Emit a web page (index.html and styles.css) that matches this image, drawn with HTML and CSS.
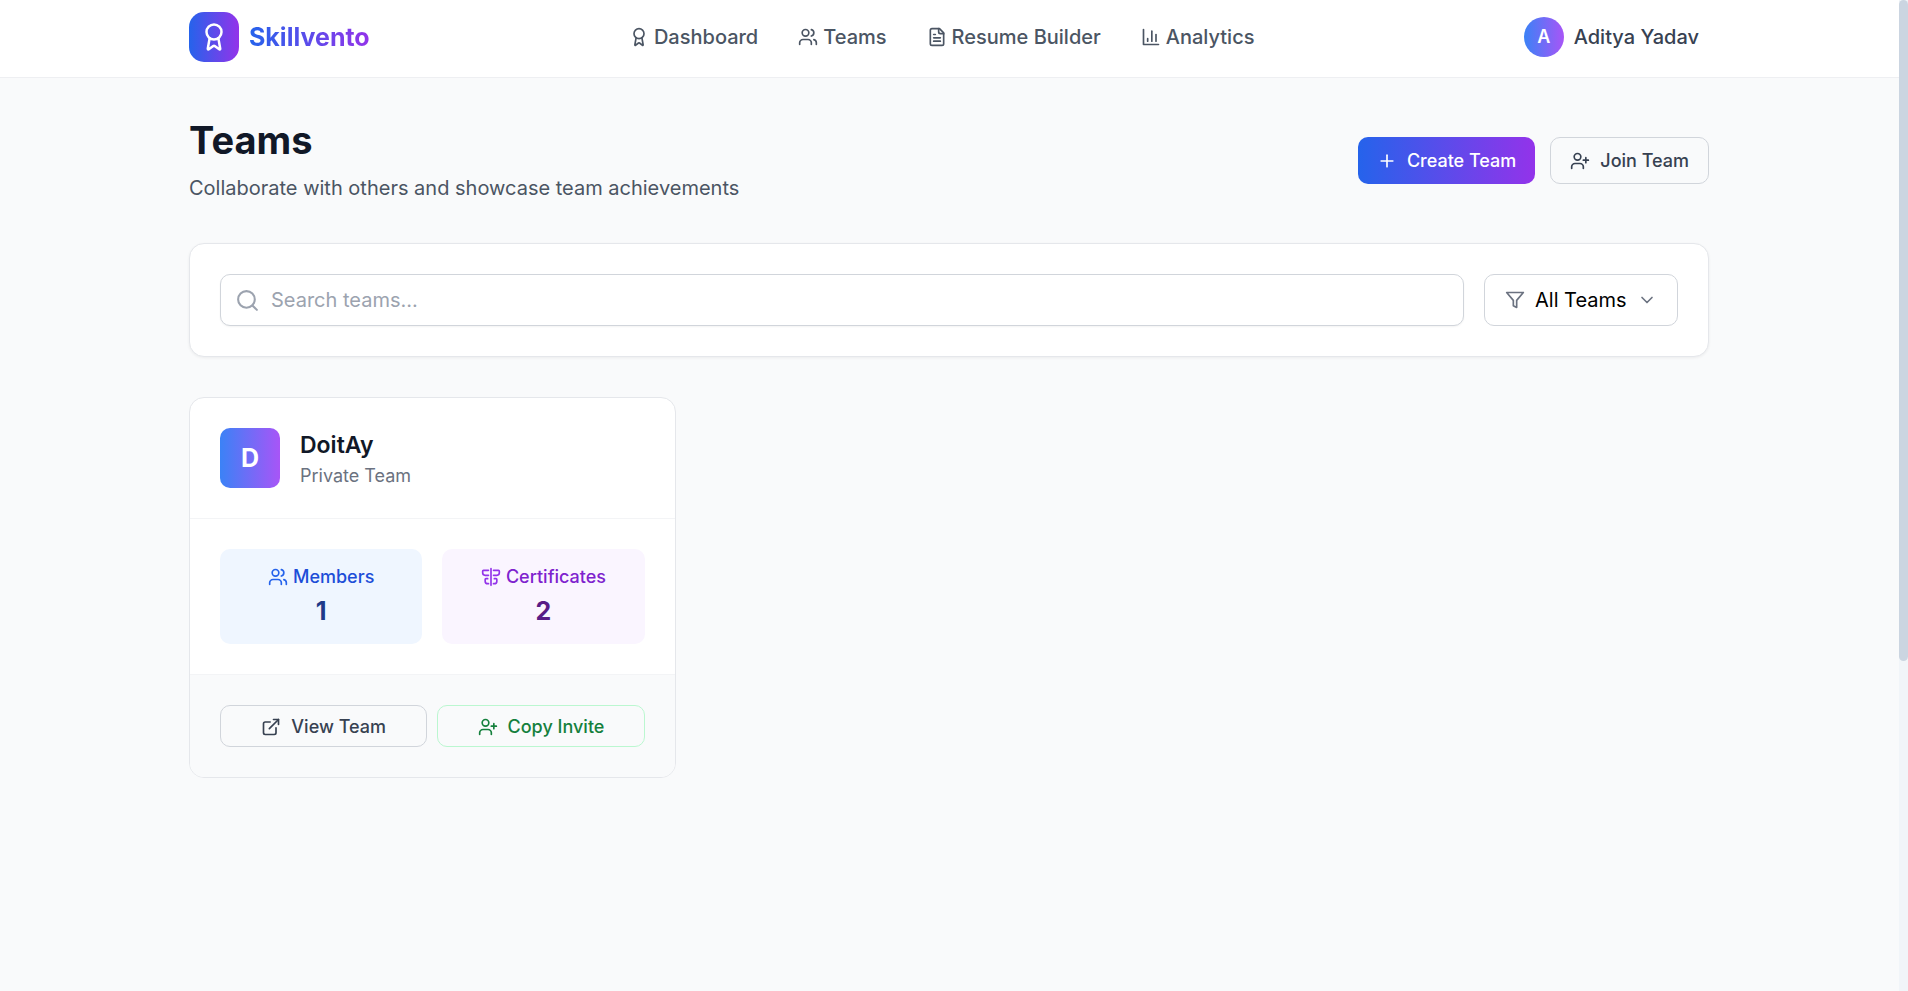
FILE: index.html
```html
<!DOCTYPE html>
<html lang="en">
  <head>
    <meta charset="UTF-8" />
    <meta name="viewport" content="width=device-width, initial-scale=1.0" />
    <title>Teams | Skillvento</title>
    <link rel="stylesheet" href="styles.css">
  </head>
  <body>
    <!-- Icon sprite -->
    <svg class="sprite" aria-hidden="true">
      <symbol id="icon-award" viewBox="0 0 24 24">
        <path d="m15.477 12.89 1.515 8.526a.5.5 0 0 1-.81.47l-3.58-2.687a1 1 0 0 0-1.197 0l-3.586 2.686a.5.5 0 0 1-.81-.469l1.514-8.526" />
        <circle cx="12" cy="8" r="6" />
      </symbol>
      <symbol id="icon-users" viewBox="0 0 24 24">
        <path d="M16 21v-2a4 4 0 0 0-4-4H6a4 4 0 0 0-4 4v2" />
        <circle cx="9" cy="7" r="4" />
        <path d="M22 21v-2a4 4 0 0 0-3-3.87" />
        <path d="M16 3.13a4 4 0 0 1 0 7.75" />
      </symbol>
      <symbol id="icon-file" viewBox="0 0 24 24">
        <path d="M15 2H6a2 2 0 0 0-2 2v16a2 2 0 0 0 2 2h12a2 2 0 0 0 2-2V7Z" />
        <path d="M14 2v4a2 2 0 0 0 2 2h4" />
        <path d="M10 9H8" />
        <path d="M16 13H8" />
        <path d="M16 17H8" />
      </symbol>
      <symbol id="icon-chart" viewBox="0 0 24 24">
        <path d="M3 3v18h18" />
        <path d="M8 17v-3" />
        <path d="M13 17V5" />
        <path d="M18 17V9" />
      </symbol>
      <symbol id="icon-plus" viewBox="0 0 24 24">
        <path d="M5 12h14" />
        <path d="M12 5v14" />
      </symbol>
      <symbol id="icon-user-plus" viewBox="0 0 24 24">
        <path d="M16 21v-2a4 4 0 0 0-4-4H6a4 4 0 0 0-4 4v2" />
        <circle cx="9" cy="7" r="4" />
        <path d="M19 8v6" />
        <path d="M22 11h-6" />
      </symbol>
      <symbol id="icon-search" viewBox="0 0 24 24">
        <circle cx="11" cy="11" r="8" />
        <path d="m21 21-4.3-4.3" />
      </symbol>
      <symbol id="icon-filter" viewBox="0 0 24 24">
        <path d="M22 3H2l8 9.46V19l4 2v-8.54L22 3z" />
      </symbol>
      <symbol id="icon-chevron" viewBox="0 0 24 24">
        <path d="m6 9 6 6 6-6" />
      </symbol>
      <symbol id="icon-certificate" viewBox="0 0 24 24">
        <path d="M12 2v20" />
        <path d="M9 4H3a1 1 0 0 0-1 1v2a3 3 0 0 0 3 3h4" />
        <path d="M15 4h6a1 1 0 0 1 1 1v2a3 3 0 0 1-3 3h-4" />
        <path d="M8 14H6a1 1 0 0 0-1 1v2a3 3 0 0 0 3 3h1" />
        <path d="M16 14h2a1 1 0 0 1 1 1v2a3 3 0 0 1-3 3h-1" />
      </symbol>
      <symbol id="icon-external" viewBox="0 0 24 24">
        <path d="M15 3h6v6" />
        <path d="M10 14 21 3" />
        <path d="M18 13v6a2 2 0 0 1-2 2H5a2 2 0 0 1-2-2V8a2 2 0 0 1 2-2h6" />
      </symbol>
    </svg>

    <header class="navbar">
      <div class="container navbar-inner">
        <a class="brand" href="#">
          <span class="brand-logo"><svg class="icon icon-lg"><use href="#icon-award" /></svg></span>
          <span class="brand-name">Skillvento</span>
        </a>
        <nav class="nav-links">
          <a href="#"><svg class="icon"><use href="#icon-award" /></svg>Dashboard</a>
          <a href="#"><svg class="icon"><use href="#icon-users" /></svg>Teams</a>
          <a href="#"><svg class="icon"><use href="#icon-file" /></svg>Resume Builder</a>
          <a href="#"><svg class="icon"><use href="#icon-chart" /></svg>Analytics</a>
        </nav>
        <button class="user-menu" type="button">
          <span class="user-avatar">A</span>
          <span>Aditya Yadav</span>
        </button>
      </div>
    </header>

    <main class="container main">
      <div class="page-header">
        <div>
          <h1>Teams</h1>
          <p>Collaborate with others and showcase team achievements</p>
        </div>
        <div class="page-actions">
          <button class="btn btn-primary" type="button"><svg class="icon"><use href="#icon-plus" /></svg>Create Team</button>
          <button class="btn" type="button"><svg class="icon"><use href="#icon-user-plus" /></svg>Join Team</button>
        </div>
      </div>

      <section class="toolbar">
        <div class="search">
          <svg class="icon search-icon"><use href="#icon-search" /></svg>
          <input type="text" placeholder="Search teams..." aria-label="Search teams" />
        </div>
        <label class="filter">
          <svg class="icon"><use href="#icon-filter" /></svg>
          <select aria-label="Filter teams">
            <option>All Teams</option>
          </select>
          <svg class="icon"><use href="#icon-chevron" /></svg>
        </label>
      </section>

      <section class="team-grid">
        <article class="team-card">
          <div class="team-header">
            <div class="team-avatar">D</div>
            <div>
              <h2>DoitAy</h2>
              <p>Private Team</p>
            </div>
          </div>
          <div class="team-stats">
            <div class="stat stat-members">
              <div class="stat-label"><svg class="icon"><use href="#icon-users" /></svg>Members</div>
              <div class="stat-value">1</div>
            </div>
            <div class="stat stat-certificates">
              <div class="stat-label"><svg class="icon"><use href="#icon-certificate" /></svg>Certificates</div>
              <div class="stat-value">2</div>
            </div>
          </div>
          <div class="team-footer">
            <button class="btn btn-sm" type="button"><svg class="icon"><use href="#icon-external" /></svg>View Team</button>
            <button class="btn btn-sm btn-invite" type="button"><svg class="icon"><use href="#icon-user-plus" /></svg>Copy Invite</button>
          </div>
        </article>
      </section>
    </main>

    <div class="scrollbar"><div class="scrollbar-thumb"></div></div>
  </body>
</html>
```
FILE: styles.css
```css
* {
  box-sizing: border-box;
  margin: 0;
  padding: 0;
}

body {
  min-height: 100vh;
  padding-right: 10px;
  background: #f9fafb;
  color: #111827;
  font-family: 'Inter', sans-serif;
  font-size: 20px;
  line-height: 30px;
}

button,
input,
select {
  font: inherit;
  color: inherit;
}

button {
  cursor: pointer;
}

a {
  color: inherit;
  text-decoration: none;
}

.sprite {
  display: none;
}

.icon {
  flex-shrink: 0;
  width: 20px;
  height: 20px;
  fill: none;
  stroke: currentColor;
  stroke-width: 2;
  stroke-linecap: round;
  stroke-linejoin: round;
}

.icon-lg {
  width: 30px;
  height: 30px;
}

.container {
  max-width: 1600px;
  margin: 0 auto;
  padding: 0 40px;
}

/* Navbar */
.navbar {
  margin-right: -10px;
  padding-right: 10px;
  background: #fff;
  border-bottom: 1px solid #eeeff2;
}

.navbar-inner {
  display: flex;
  align-items: center;
  justify-content: space-between;
  padding-top: 12px;
  padding-bottom: 15px;
}

.brand {
  display: flex;
  align-items: center;
  gap: 10px;
}

.brand-logo {
  display: flex;
  align-items: center;
  justify-content: center;
  width: 50px;
  height: 50px;
  border-radius: 15px;
  background: linear-gradient(to right, #2563eb, #9333ea);
  color: #fff;
}

.brand-name {
  font-size: 25px;
  font-weight: 700;
  line-height: 35px;
  background: linear-gradient(to right, #2563eb, #9333ea);
  -webkit-background-clip: text;
  background-clip: text;
  color: transparent;
}

.nav-links {
  display: flex;
  gap: 40px;
  font-weight: 500;
  color: #4b5563;
}

.nav-links a {
  display: flex;
  align-items: center;
  gap: 5px;
}

.user-menu {
  display: flex;
  align-items: center;
  gap: 10px;
  padding: 0 10px;
  border: 0;
  background: none;
  color: #374151;
  font-weight: 500;
}

.user-avatar {
  display: flex;
  align-items: center;
  justify-content: center;
  width: 40px;
  height: 40px;
  border-radius: 50%;
  background: linear-gradient(to right, #3b82f6, #a855f7);
  color: #fff;
  font-size: 18px;
  font-weight: 600;
}

/* Page */
.main {
  padding-top: 40px;
  padding-bottom: 40px;
}

.page-header {
  display: flex;
  align-items: center;
  justify-content: space-between;
  margin-bottom: 40px;
}

.page-header h1 {
  margin-bottom: 10px;
  font-size: 38px;
  font-weight: 700;
  line-height: 45px;
}

.page-header p {
  color: #4b5563;
}

.page-actions {
  display: flex;
  gap: 15px;
}

.btn {
  display: flex;
  align-items: center;
  justify-content: center;
  gap: 10px;
  padding: 10px 19px;
  border: 1px solid #d1d5db;
  border-radius: 10px;
  background: none;
  color: #374151;
  font-size: 18px;
  font-weight: 500;
  line-height: 25px;
}

.btn-primary {
  padding: 11px 19px;
  border: 0;
  background: linear-gradient(to right, #2563eb, #9333ea);
  color: #fff;
}

.btn-sm {
  flex: 1;
  padding: 8px 15px 7px;
}

.btn-invite {
  border-color: #bbf7d0;
  color: #15803d;
}

/* Search and filter */
.toolbar {
  display: flex;
  gap: 20px;
  margin-bottom: 40px;
  padding: 30px;
  border: 1px solid #e5e7eb;
  border-radius: 15px;
  background: #fff;
  box-shadow: 0 1px 3px rgba(0, 0, 0, 0.06);
}

.search {
  position: relative;
  flex: 1;
}

.search-icon {
  position: absolute;
  top: 14px;
  left: 15px;
  width: 25px;
  height: 25px;
  color: #9ca3af;
}

.search input {
  width: 100%;
  height: 52px;
  padding: 0 20px 0 50px;
  border: 1px solid #d1d5db;
  border-radius: 10px;
  background: #fff;
  box-shadow: 0 1px 2px rgba(0, 0, 0, 0.05);
}

.search input::placeholder {
  color: #9ca3af;
}

.filter {
  display: flex;
  align-items: center;
  gap: 10px;
  padding: 0 20px;
  border: 1px solid #d1d5db;
  border-radius: 10px;
  color: #6b7280;
}

.filter select {
  appearance: none;
  border: 0;
  background: none;
  color: #000;
}

/* Team cards */
.team-grid {
  display: grid;
  grid-template-columns: repeat(3, 1fr);
  gap: 30px;
}

.team-card {
  overflow: hidden;
  border: 1px solid #e5e7eb;
  border-radius: 15px;
  background: #fff;
}

.team-header {
  display: flex;
  align-items: center;
  gap: 20px;
  padding: 30px;
  border-bottom: 1px solid #f3f4f6;
}

.team-avatar {
  display: flex;
  align-items: center;
  justify-content: center;
  width: 60px;
  height: 60px;
  border-radius: 10px;
  background: linear-gradient(to right, #3b82f6, #a855f7);
  color: #fff;
  font-size: 25px;
  font-weight: 700;
}

.team-header h2 {
  font-size: 23px;
  font-weight: 600;
  line-height: 35px;
}

.team-header p {
  color: #6b7280;
  font-size: 18px;
  line-height: 25px;
}

.team-stats {
  display: grid;
  grid-template-columns: 1fr 1fr;
  gap: 20px;
  padding: 30px;
}

.stat {
  padding: 15px;
  border-radius: 10px;
  text-align: center;
}

.stat-label {
  display: flex;
  align-items: center;
  justify-content: center;
  gap: 5px;
  margin-bottom: 5px;
  font-size: 18px;
  font-weight: 500;
  line-height: 25px;
}

.stat-value {
  font-size: 25px;
  font-weight: 700;
  line-height: 35px;
}

.stat-members {
  background: #eff6ff;
  color: #1e3a8a;
}

.stat-members .stat-label {
  color: #1d4ed8;
}

.stat-members .icon {
  color: #2563eb;
}

.stat-certificates {
  background: #faf5ff;
  color: #581c87;
}

.stat-certificates .stat-label {
  color: #7e22ce;
}

.stat-certificates .icon {
  color: #9333ea;
}

.team-footer {
  display: flex;
  gap: 10px;
  padding: 30px;
  border-top: 1px solid #f3f4f6;
  background: #f9fafb;
}

/* Page scrollbar */
.scrollbar {
  position: fixed;
  top: 0;
  right: 0;
  bottom: 0;
  width: 9px;
  background: #f1f5f9;
}

.scrollbar-thumb {
  height: 66.7%;
  border-radius: 5px;
  background: #cbd5e1;
}
```
